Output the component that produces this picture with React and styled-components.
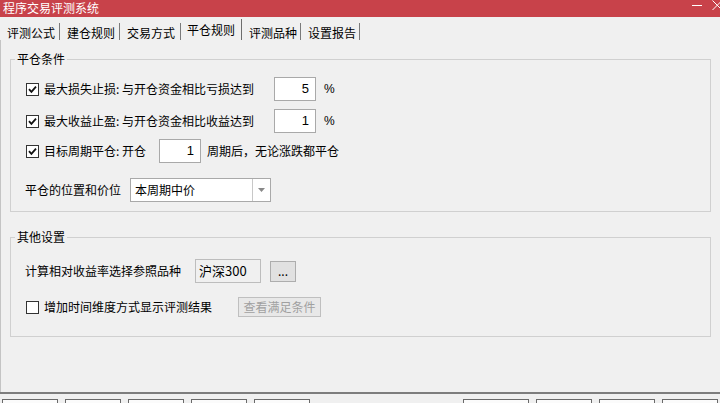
import React from "react";
import styled, { createGlobalStyle } from "styled-components";

const GlobalStyle = createGlobalStyle`
  html, body {
    margin: 0;
    padding: 0;
    background: #f0f0f0;
  }
  body {
    font-family: "Noto Sans CJK SC", "Noto Sans", sans-serif;
    font-size: 12px;
    color: #000;
  }
`;

const Window = styled.div`
  width: 720px;
  height: 403px;
  display: flex;
  flex-direction: column;
  overflow: hidden;
  background: #f0f0f0;
`;

const TitleBar = styled.div`
  height: 17px;
  flex: none;
  background: #c8424a;
  display: flex;
  align-items: center;
  justify-content: space-between;
  padding-left: 3px;
  color: #fff;
  font-size: 12px;
  line-height: 15px;
`;

const TitleText = styled.span`
  margin-top: -3px;
`;

const WinButtons = styled.div`
  display: flex;
  align-items: flex-start;
  align-self: flex-start;
  gap: 9px;
  margin-right: -3px;
`;

const TabStrip = styled.div`
  height: 23px;
  flex: none;
  display: flex;
  align-items: flex-end;
`;

const Tab = styled.div`
  width: ${(p) => p.$width}px;
  box-sizing: border-box;
  height: ${(p) => (p.$active ? 21 : 17)}px;
  padding: ${(p) => (p.$active ? "3px 0 0 6px" : "2px 0 0 7px")};
  line-height: 16px;
  font-size: 12px;
  border-right: 1px solid ${(p) => (p.$active ? "#6d6d6d" : "#7a7a7a")};
  background: #f0f0f0;
  white-space: nowrap;
`;

const Body = styled.div`
  flex: 1;
  min-height: 0;
  border-left: 1px solid #c4c4c4;
  padding: 11px 9px 0 9px;
  display: flex;
  flex-direction: column;
`;

const Group = styled.fieldset`
  margin: ${(p) => p.$top || 0}px 0 0 0;
  padding: ${(p) => p.$padTop}px 14px ${(p) => p.$padBottom}px 14px;
  border: 1px solid #d0d0d0;
  border-radius: 0;
  min-width: 0;
  display: flex;
  flex-direction: column;
`;

const Caption = styled.legend`
  margin-left: -10px;
  padding: 0 2px;
  font-size: 12px;
  line-height: 16px;
`;

const Row = styled.div`
  display: flex;
  align-items: center;
  height: ${(p) => p.$h || 24}px;
  margin-top: ${(p) => p.$gap || 0}px;
`;

const Label = styled.span`
  width: ${(p) => (p.$w ? `${p.$w}px` : "auto")};
  flex: none;
  white-space: nowrap;
  line-height: 16px;
  margin-left: ${(p) => p.$ml || 0}px;
`;

const Box = styled.span`
  width: 13px;
  height: 13px;
  box-sizing: border-box;
  border: 1px solid #333;
  background: #fff;
  margin: 0 5px 0 1px;
  flex: none;
  display: flex;
  align-items: center;
  justify-content: center;
`;

const NumberField = styled.div`
  width: 42px;
  height: 24px;
  box-sizing: border-box;
  border: 1px solid #a9a9a9;
  background: #fff;
  text-align: right;
  padding-right: 6px;
  line-height: 22px;
  font-family: "Liberation Sans", "Noto Sans CJK SC", sans-serif;
  font-size: 13px;
  flex: none;
`;

const Unit = styled.span`
  margin-left: 8px;
  font-family: "Liberation Sans", sans-serif;
  font-size: 12px;
`;

const Select = styled.div`
  width: 141px;
  height: 24px;
  box-sizing: border-box;
  border: 1px solid #a9a9a9;
  background: #fff;
  display: flex;
  flex: none;
`;

const SelectValue = styled.span`
  flex: 1;
  padding-left: 4px;
  line-height: 22px;
`;

const SelectArrow = styled.span`
  width: 17px;
  border-left: 1px solid #c8c8c8;
  display: flex;
  align-items: center;
  justify-content: center;
`;

const ReadOnly = styled.div`
  width: 66px;
  height: 24px;
  box-sizing: border-box;
  border: 1px solid #bdbdbd;
  background: #f0f0f0;
  padding-left: 3px;
  line-height: 22px;
  font-size: 13px;
  flex: none;
`;

const Button = styled.div`
  width: ${(p) => p.$w}px;
  height: ${(p) => p.$h}px;
  box-sizing: border-box;
  border: 1px solid ${(p) => (p.$disabled ? "#bfbfbf" : "#adadad")};
  background: ${(p) => (p.$disabled ? "#e8e8e8" : "#e1e1e1")};
  color: ${(p) => (p.$disabled ? "#a0a0a0" : "#000")};
  display: flex;
  align-items: center;
  justify-content: center;
  line-height: 16px;
  margin-left: ${(p) => p.$ml || 0}px;
  flex: none;
`;

const Footer = styled.div`
  height: 11px;
  flex: none;
  border-top: 2px solid #7d7d7d;
  box-sizing: border-box;
  display: flex;
  justify-content: space-between;
  padding: 5px 2px 0 2px;
  overflow: hidden;
`;

const ButtonSet = styled.div`
  display: flex;
  gap: 7px;
`;

const FooterButton = styled.div`
  width: ${(p) => p.$w || 56}px;
  height: 24px;
  box-sizing: border-box;
  border: 1px solid #6a6a6a;
  background: #fbfbfb;
`;

const Check = ({ checked }) => (
  <Box>
    {checked && (
      <svg width="9" height="9" viewBox="0 0 9 9">
        <path d="M1 4.2 L3.4 6.8 L8 1.6" fill="none" stroke="#111" strokeWidth="1.8" />
      </svg>
    )}
  </Box>
);

const tabs = [
  { name: "评测公式", width: 60 },
  { name: "建仓规则", width: 60 },
  { name: "交易方式", width: 61 },
  { name: "平仓规则", width: 61, active: true },
  { name: "评测品种", width: 59 },
  { name: "设置报告", width: 59 },
];

const App = () => (
  <Window>
    <GlobalStyle />
    <TitleBar>
      <TitleText>程序交易评测系统</TitleText>
      <WinButtons>
        <svg width="11" height="10" viewBox="0 0 11 10">
          <path d="M0 5.5 H10" stroke="#fff" strokeWidth="1" />
        </svg>
        <svg width="11" height="11" viewBox="0 0 11 11">
          <path d="M0.5 0.5 L10 10 M10 0.5 L0.5 10" stroke="#fff" strokeWidth="1" />
        </svg>
      </WinButtons>
    </TitleBar>

    <TabStrip>
      {tabs.map((t) => (
        <Tab key={t.name} $width={t.width} $active={t.active}>{t.name}</Tab>
      ))}
    </TabStrip>

    <Body>
      <Group $padTop={10} $padBottom={9}>
        <Caption>平仓条件</Caption>
        <Row>
          <Check checked />
          <Label $w={230}>最大损失止损: 与开仓资金相比亏损达到</Label>
          <NumberField>5</NumberField>
          <Unit>%</Unit>
        </Row>
        <Row $gap={8}>
          <Check checked />
          <Label $w={230}>最大收益止盈: 与开仓资金相比收益达到</Label>
          <NumberField>1</NumberField>
          <Unit>%</Unit>
        </Row>
        <Row $gap={6}>
          <Check checked />
          <Label $w={115}>目标周期平仓: 开仓</Label>
          <NumberField>1</NumberField>
          <Label $ml={6}>周期后，无论涨跌都平仓</Label>
        </Row>
        <Row $gap={15}>
          <Label $w={105}>平仓的位置和价位</Label>
          <Select>
            <SelectValue>本周期中价</SelectValue>
            <SelectArrow>
              <svg width="7" height="4" viewBox="0 0 7 4">
                <path d="M0 0 H7 L3.5 4 Z" fill="#888" />
              </svg>
            </SelectArrow>
          </Select>
        </Row>
      </Group>

      <Group $top={17} $padTop={14} $padBottom={18}>
        <Caption>其他设置</Caption>
        <Row>
          <Label $w={170}>计算相对收益率选择参照品种</Label>
          <ReadOnly>沪深300</ReadOnly>
          <Button $w={26} $h={21} $ml={9}>...</Button>
        </Row>
        <Row $gap={13} $h={22}>
          <Check />
          <Label $w={194}>增加时间维度方式显示评测结果</Label>
          <Button $w={83} $h={20} $disabled>查看满足条件</Button>
        </Row>
      </Group>
    </Body>

    <Footer>
      <ButtonSet>
        <FooterButton />
        <FooterButton />
        <FooterButton />
        <FooterButton />
        <FooterButton />
      </ButtonSet>
      <ButtonSet>
        <FooterButton $w={66} />
        <FooterButton />
        <FooterButton />
        <FooterButton />
      </ButtonSet>
    </Footer>
  </Window>
);

export default App;
